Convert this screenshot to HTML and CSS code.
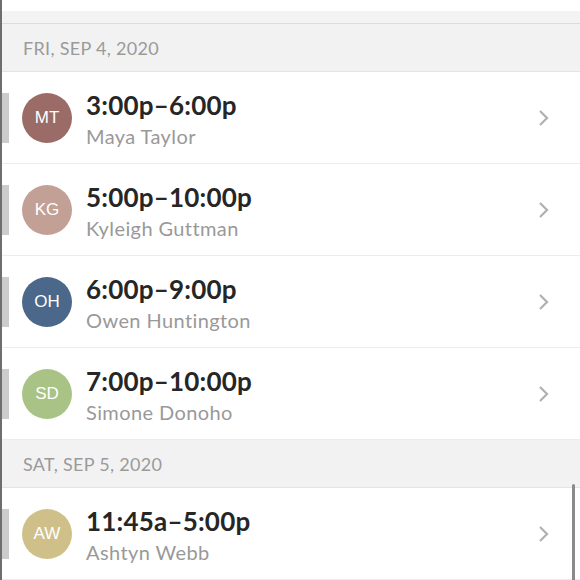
FILE: index.html
```html
<!DOCTYPE html>
<html lang="en">

<head>
    <meta charset="UTF-8">
    <meta name="viewport" content="width=device-width, initial-scale=1.0">
    <title>Shifts</title>
    <link rel="stylesheet" href="styles.css">
</head>

<body>
    <div class="screen">
        <div class="top-gap"></div>
        <div class="top-band"></div>

        <div class="day-header">FRI, SEP 4, 2020</div>

        <div class="shift">
            <span class="shift-bar"></span>
            <span class="avatar" style="background-color: #9b6b67;">MT</span>
            <div class="shift-info">
                <div class="shift-time">3:00p–6:00p</div>
                <div class="shift-name">Maya Taylor</div>
            </div>
            <svg class="chevron" width="12" height="18" viewBox="0 0 12 18">
                <path d="M2 2 L9 9 L2 16" fill="none" stroke="#b0b0b0" stroke-width="2.2" />
            </svg>
        </div>

        <div class="shift">
            <span class="shift-bar"></span>
            <span class="avatar" style="background-color: #c2a096;">KG</span>
            <div class="shift-info">
                <div class="shift-time">5:00p–10:00p</div>
                <div class="shift-name">Kyleigh Guttman</div>
            </div>
            <svg class="chevron" width="12" height="18" viewBox="0 0 12 18">
                <path d="M2 2 L9 9 L2 16" fill="none" stroke="#b0b0b0" stroke-width="2.2" />
            </svg>
        </div>

        <div class="shift">
            <span class="shift-bar"></span>
            <span class="avatar" style="background-color: #4b6789;">OH</span>
            <div class="shift-info">
                <div class="shift-time">6:00p–9:00p</div>
                <div class="shift-name">Owen Huntington</div>
            </div>
            <svg class="chevron" width="12" height="18" viewBox="0 0 12 18">
                <path d="M2 2 L9 9 L2 16" fill="none" stroke="#b0b0b0" stroke-width="2.2" />
            </svg>
        </div>

        <div class="shift">
            <span class="shift-bar"></span>
            <span class="avatar" style="background-color: #a8c385;">SD</span>
            <div class="shift-info">
                <div class="shift-time">7:00p–10:00p</div>
                <div class="shift-name">Simone Donoho</div>
            </div>
            <svg class="chevron" width="12" height="18" viewBox="0 0 12 18">
                <path d="M2 2 L9 9 L2 16" fill="none" stroke="#b0b0b0" stroke-width="2.2" />
            </svg>
        </div>

        <div class="day-header">SAT, SEP 5, 2020</div>

        <div class="shift">
            <span class="shift-bar"></span>
            <span class="avatar" style="background-color: #cfc08a;">AW</span>
            <div class="shift-info">
                <div class="shift-time">11:45a–5:00p</div>
                <div class="shift-name">Ashtyn Webb</div>
            </div>
            <svg class="chevron" width="12" height="18" viewBox="0 0 12 18">
                <path d="M2 2 L9 9 L2 16" fill="none" stroke="#b0b0b0" stroke-width="2.2" />
            </svg>
        </div>

        <span class="scrollbar"></span>
    </div>
</body>

</html>
```

FILE: styles.css
```css
body {
    margin: 0;
    padding: 0;
    background-color: white;
    font-family: Lato, "Open Sans", sans-serif;
}

.screen {
    position: relative;
    height: 580px;
    overflow: hidden;
    border-left: 2px solid #6e6e6e;
}

.top-gap {
    height: 11px;
}

.top-band {
    height: 12px;
    background-color: #f3f3f3;
    border-bottom: 1px solid #dcdcdc;
}

.day-header {
    height: 47px;
    padding-left: 21px;
    display: flex;
    align-items: center;
    background-color: #f2f2f2;
    border-bottom: 1px solid #e4e4e4;
    color: #9a9a9a;
    font-size: 18px;
    letter-spacing: 0.3px;
}

.shift {
    height: 91px;
    display: flex;
    align-items: center;
    border-bottom: 1px solid #ececec;
}

.shift-bar {
    width: 7px;
    height: 50px;
    background-color: #cccccc;
}

.avatar {
    width: 50px;
    height: 50px;
    margin-left: 13px;
    border-radius: 50%;
    display: flex;
    align-items: center;
    justify-content: center;
    color: white;
    font-family: "Liberation Sans", Arial, sans-serif;
    font-size: 17px;
}

.shift-info {
    flex: 1;
    margin-left: 14px;
    padding-top: 2px;
}

.shift-time {
    font-size: 26px;
    font-weight: bold;
    color: #262626;
    line-height: 30px;
    letter-spacing: 0.2px;
}

.shift-name {
    margin-top: 4px;
    font-size: 20px;
    color: #999;
    line-height: 24px;
    letter-spacing: 0.4px;
}

.chevron {
    margin-right: 30px;
}

.scrollbar {
    position: absolute;
    right: 5px;
    top: 484px;
    width: 3px;
    height: 110px;
    border-radius: 2px;
    background-color: #8a8a8a;
}
```
